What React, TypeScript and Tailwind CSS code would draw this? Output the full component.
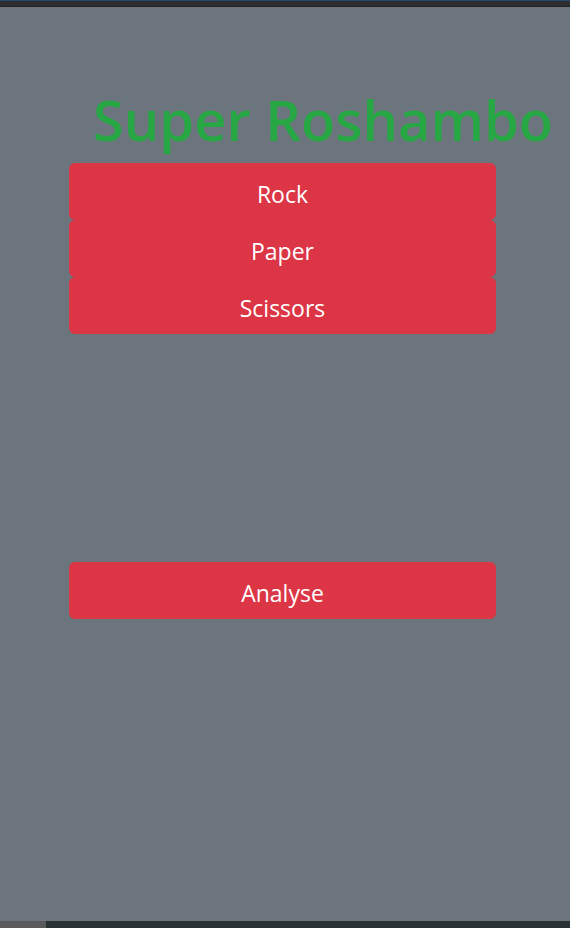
const choices = ["Rock", "Paper", "Scissors"];

function GameButton({ label }: { label: string }) {
  return (
    <button
      type="button"
      className="block h-[57px] w-full rounded-md bg-[#dc3545] pt-1 text-[23px] leading-9 text-white"
    >
      {label}
    </button>
  );
}

export default function App() {
  return (
    <div className="flex min-h-screen flex-col bg-[#6c757d] font-['Open_Sans','Noto_Sans',sans-serif]">
      <div className="h-[7px] border-t border-b border-t-[#24476b] border-b-[#202020] bg-[#2e2e2e]" />
      <main className="flex-1 pt-[76px] pr-[74px] pl-[69px]">
        <h1 className="mb-2 pl-6 text-[56px] leading-[72px] font-semibold whitespace-nowrap text-[#28a745]">
          Super Roshambo
        </h1>
        <div className="flex flex-col">
          {choices.map((choice) => (
            <GameButton key={choice} label={choice} />
          ))}
        </div>
        <div className="mt-57">
          <GameButton label="Analyse" />
        </div>
      </main>
      <div className="h-[7px] bg-[#2b3233]">
        <div className="h-full w-[46px] bg-[#5a5a5a]" />
      </div>
    </div>
  );
}
